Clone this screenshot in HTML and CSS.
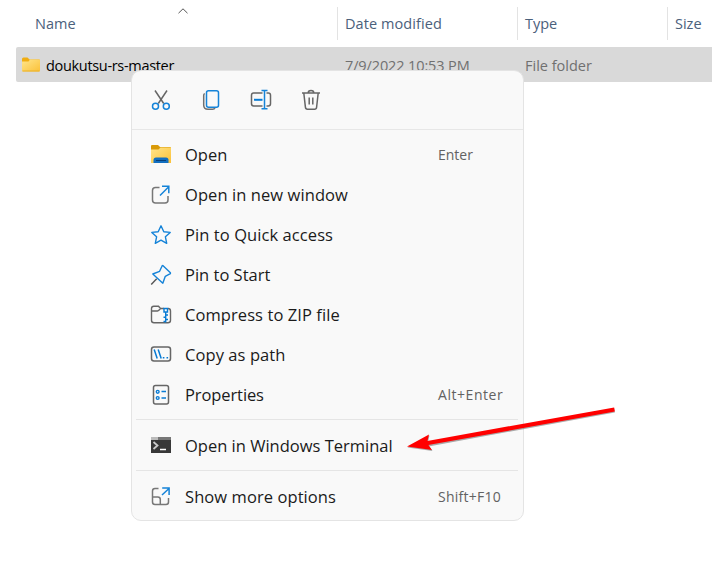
FILE: index.html
```html
<!DOCTYPE html>
<html lang="en">
<head>
<meta charset="utf-8">
<title>File Explorer</title>
<link rel="stylesheet" href="styles.css">
</head>
<body>
<main class="explorer">
  <header class="columns">
    <div class="col name"><span>Name</span>
      <svg class="sort" width="10" height="6" viewBox="0 0 10 6"><path d="M.5 5.200 5 .8 9.500 5.200" fill="none" stroke="#555"/></svg>
    </div>
    <div class="col date"><span>Date modified</span></div>
    <div class="col type"><span>Type</span></div>
    <div class="col size"><span>Size</span></div>
  </header>
  <div class="file">
    <div class="cell fname">
      <svg width="20" height="18" viewBox="0 0 20 18"><defs><linearGradient id="f" x2="1" y2="1"><stop stop-color="#ffe58b"/><stop offset="1" stop-color="#fbc138"/></linearGradient></defs><path d="M1 3q0-1.500 1.500-1.500h4L8.500 3.500H18q1 0 1 1V8H1z" fill="#f0ad12"/><path d="M1 5.500h6.500l1.500-2h9q1 0 1 1v10q0 1-1 1H2q-1 0-1-1z" fill="url(#f)"/><path d="M1.500 15h17" stroke="#e9b12a"/></svg>
      <span>doukutsu-rs-master</span>
    </div>
    <div class="cell fdate"><span>7/9/2022 10:53 PM</span></div>
    <div class="cell"><span>File folder</span></div>
  </div>
</main>

<nav class="menu">
  <div class="tools">
    <svg viewBox="0 0 22 22"><g fill="none" stroke-width="1.500"><path d="m5 1.500 8.700 13M17 1.500 8.300 14.500" stroke="#666"/><circle cx="5.500" cy="17.200" r="3" stroke="#1583d8"/><circle cx="16.300" cy="17.200" r="3" stroke="#1583d8"/></g></svg>
    <svg viewBox="0 0 22 22"><g fill="none" stroke-width="1.500"><path d="M4.700 4.500q-1 .7-1 2V16q0 4.300 4.300 4.300h4.500q2 0 2.500-1.500" stroke="#707070"/><rect x="6.500" y="1.700" width="12" height="16.600" rx="2" stroke="#1583d8"/></g></svg>
    <svg viewBox="0 0 22 22"><g fill="none" stroke-width="1.500"><path d="M12.500 4H3.700Q1.500 4 1.500 6.200v8.600Q1.500 17 3.700 17h8.800M16.500 4h1.800q2.200 0 2.200 2.200v8.600q0 2.200-2.200 2.200h-1.800" stroke="#666"/><path d="M11.500 1.500h6M11.500 19.700h6M14.500 1.500v18" stroke="#1583d8"/><path d="M4 10.800h8.500" stroke="#087bd4" stroke-width="2"/></g></svg>
    <svg viewBox="0 0 22 22"><path d="M2 4h18M3.800 4l1.600 14.200q.2 2 2 2h7.200q1.800 0 2-2L18.200 4M8.200 4q0-2.500 2.800-2.500T13.800 4M9.200 8.500v7M12.800 8.500v7" fill="none" stroke="#666" stroke-width="1.500"/></svg>
  </div>
  <div class="items">
    <div class="item"><svg viewBox="0 0 22 22"><path d="M1 2q0-1 1-1h6l2 2h10q1 0 1 1v5H1z" fill="#d99a09"/><path d="M1 5.500h7.500L10.500 3.500H21V19H1z" fill="url(#f)"/><path d="M3.500 19v-3q0-2.500 2.500-2.500h10q2.500 0 2.500 2.500v3z" fill="#126fc0"/><path d="M6 16.500h10" stroke="#073f78"/></svg><span class="m-open">Open</span><kbd class="k-enter">Enter</kbd></div>
    <div class="item"><svg viewBox="0 0 22 22"><g fill="none" stroke-width="1.500"><path d="M9.500 3.500H5.500Q2.500 3.500 2.500 6.500v9.500q0 3 3 3h9.500q3 0 3-3V12" stroke="#777"/><path d="M10 11.500 18.500 3M12 2.300h6.800v7" stroke="#1583d8"/></g></svg><span class="wide">Open in new window</span></div>
    <div class="item"><svg viewBox="0 0 22 22"><path d="m11 1.800 2.800 5.900 6.400.7-4.800 4.400 1.300 6.500-5.700-3.200-5.700 3.200 1.300-6.500L1.800 8.400l6.400-.7z" fill="none" stroke="#1583d8" stroke-width="1.400" stroke-linejoin="round"/></svg><span class="wide">Pin to Quick access</span></div>
    <div class="item"><svg viewBox="0 0 22 22"><g fill="none" stroke-width="1.400"><path d="m1.200 20.500 5.500-5.700" stroke="#555"/><path d="m12.800 1.500 7.600 7.200q.4 1-1 1.500l-4.100 2.100-2.500 6.900-10-9.200 6.800-2.700 2-4.300q.4-1.500 1.200-1.500z" stroke="#1583d8" stroke-linejoin="round"/></g></svg><span>Pin to Start</span></div>
    <div class="item"><svg viewBox="0 0 22 22"><g fill="none" stroke-width="1.400"><path d="M14 4.500h-3.500L8.500 2.200H3.800Q1.500 2.200 1.500 4.500v11.700q0 2.500 2.500 2.500h14q2.500 0 2.500-2.500V7q0-2.500-2.500-2.500M1.700 7h5.800q1 0 3-2.500" stroke="#666"/><path d="M14 4.500h3.500V8H14zM15.700 8v10.500M15.700 11h2.300M13.500 13.300h2.200M15.700 15.500H18M13.500 17.500h2.200" stroke="#087bd4"/></g></svg><span class="wide">Compress to ZIP file</span></div>
    <div class="item"><svg viewBox="0 0 22 22"><rect x="1.500" y="3" width="19" height="14" rx="2.500" fill="none" stroke="#666" stroke-width="1.500"/><path d="m4.200 5.500 3 9M8.200 5.500l3 9M12.800 13.700h1.600M16.500 13.700h1.600" fill="none" stroke="#087bd4" stroke-width="1.500"/></svg><span class="wide">Copy as path</span></div>
    <div class="item"><svg viewBox="0 0 22 22"><rect x="3.500" y="1.500" width="15" height="18.500" rx="2" fill="none" stroke="#666" stroke-width="1.500"/><g fill="none" stroke="#087bd4" stroke-width="1.400"><circle cx="7.700" cy="7.800" r="1.400"/><circle cx="7.700" cy="14" r="1.400"/><path d="M11.500 7.500H16M11.500 14H16"/></g></svg><span class="narrow">Properties</span><kbd class="k-alt">Alt+Enter</kbd></div>
    <hr>
    <div class="item"><svg viewBox="0 0 22 22"><path d="M1 2h20v16H1z" fill="#383838"/><path d="M1 2h20v3H1z" fill="#777"/><path d="M1 2h7v3H1z" fill="#bbb"/><path d="m3.500 7 4 3.500-4 3.500" fill="none" stroke="#ccc" stroke-width="1.800"/><path d="M10 14.500h6" stroke="#fff" stroke-width="1.500"/></svg><span>Open in Windows Terminal</span></div>
    <hr>
    <div class="item"><svg viewBox="0 0 22 22"><g fill="none" stroke-width="1.500"><path d="M8.500 2.500H5Q2.500 2.500 2.500 5v11Q2.500 18.500 5 18.500h11q2.500 0 2.500-2.500v-4M2.500 11h5.300q2.500 0 2.500 2.500v5" stroke="#777"/><path d="m12 9 7-6.500M12.200 2h6.900v7" stroke="#1583d8"/></g></svg><span class="wide">Show more options</span><kbd class="k-shift">Shift+F10</kbd></div>
  </div>
</nav>

<svg class="arrow" width="210" height="50" viewBox="0 0 210 50"><g transform="translate(.5 1)" opacity=".4"><path d="M207 4.500 18 39" stroke="#333" stroke-width="4"/><path d="m0 41.500 22-12-2 8.500 5 7z" fill="#333"/></g><path d="M207.500 4.500 18 38.500" stroke="#f00" stroke-width="4.200"/><path d="m0 41.500 22-12-2 8.500 5 7z" fill="#f00"/></svg>
</body>
</html>
```
FILE: styles.css
```css
* { box-sizing: border-box; }
body {
  margin: 0;
  height: 571px;
  overflow: hidden;
  background: #fff;
  font: 14.5px/20px "Open Sans", "Noto Sans", sans-serif;
}
.explorer { padding-left: 16px; }
.columns {
  display: grid;
  grid-template-columns: 321px 180px 150px 45px;
  height: 47px;
  padding-top: 7px;
  color: #4b607b;
}
.col { height: 33px; padding: 7px 0 0 8px; border-right: 1px solid #e3e3e3; white-space: nowrap; }
.col.name { position: relative; padding-left: 19px; width: 322px; }
.col.date { width: 181px; letter-spacing: .08px; }
.col.type { width: 151px; }
.col.size { border: 0; }
.sort { position: absolute; left: 162px; top: 1px; }
.file {
  display: grid;
  grid-template-columns: 329px 180px auto;
  align-items: center;
  height: 35px;
  background: #d9d9d9;
  border-radius: 2px 0 0 2px;
  color: #707070;
}
.cell { display: flex; align-items: center; white-space: nowrap; padding-top: 2px; }
.fname { color: #000; padding-left: 5px; gap: 5px; letter-spacing: -.32px; }
.fdate { letter-spacing: -.12px; }
.fname svg { margin-top: -2px; }
.menu {
  position: absolute;
  left: 131px;
  top: 70px;
  width: 393px;
  height: 451px;
  background: #f9f9f9;
  border: 1px solid #e4e4e4;
  border-radius: 10px;
}
.tools {
  display: flex;
  align-items: center;
  gap: 28px;
  height: 59px;
  padding-left: 18px;
  border-bottom: 1px solid #e7e7e7;
}
.tools svg, .item svg { width: 22px; height: 22px; flex: none; }
.items { padding: 5px 5px 0 4px; }
.item {
  display: flex;
  align-items: center;
  height: 40px;
  padding-left: 14px;
  color: #1b1b1b;
  font-size: 16.5px;
  white-space: nowrap;
}
.item span { width: 266px; padding-left: 13px; }
.item .wide { letter-spacing: .08px; }
.item .narrow { letter-spacing: -.1px; }
.item kbd { font: 14px/20px "Open Sans", "Noto Sans", sans-serif; color: #626262; }
.item .k-alt { letter-spacing: .55px; }
.item .k-shift { letter-spacing: .25px; }
hr { height: 1px; border: 0; margin: 4px 0 6px; background: #e5e5e5; }
.arrow { position: absolute; left: 407px; top: 405px; }
```
